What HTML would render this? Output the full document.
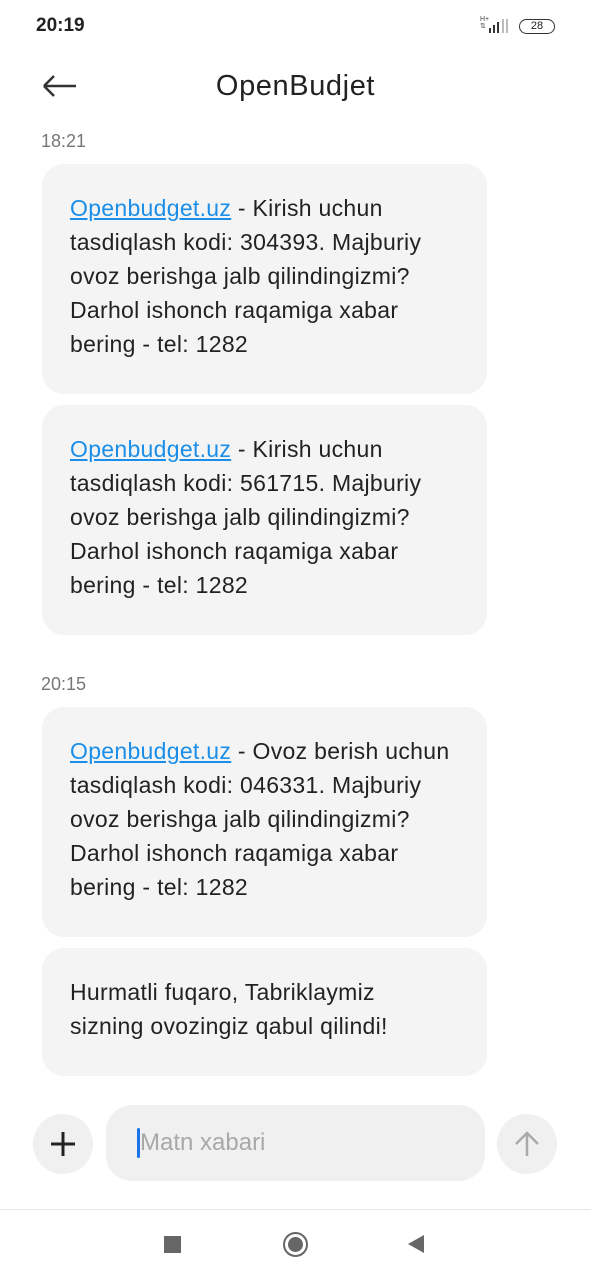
<!DOCTYPE html>
<html><head><meta charset="utf-8"><style>
*{margin:0;padding:0;box-sizing:border-box}
body{width:591px;height:1280px;background:#fff;font-family:"Liberation Sans",sans-serif;position:relative;overflow:hidden;color:#222}
.a{position:absolute}
.b{position:absolute;left:42px;width:445px;background:#f4f4f4;border-radius:22px;padding:27px 0 0 28px;font-size:23px;letter-spacing:0.3px;line-height:34px;color:#222;white-space:nowrap}
.b a{color:#1a8ee8;text-decoration:underline}
.t{position:absolute;left:41px;font-size:18px;color:#777}
</style></head><body>
<div class="a" style="left:36px;top:15px;font-size:19px;font-weight:bold;color:#222">20:19</div>
<div class="a" style="left:480px;top:16px;font-size:7px;color:#444;line-height:7px">H+<br>⇅</div>
<svg class="a" style="left:488px;top:18px" width="24" height="16"><rect x="1" y="10" width="2" height="5" fill="#333"/><rect x="5" y="7" width="2" height="8" fill="#333"/><rect x="9" y="4" width="2" height="11" fill="#333"/><rect x="14" y="1" width="2" height="14" fill="#bbb"/><rect x="18" y="1" width="2" height="14" fill="#bbb"/></svg>
<div class="a" style="left:519px;top:19px;width:36px;height:15px;border:1.5px solid #333;border-radius:8px;font-size:11px;text-align:center;line-height:12px;color:#222">28</div>
<svg class="a" style="left:40px;top:72px" width="40" height="28"><path d="M4 14H36M4 14L14 4M4 14L14 24" stroke="#333" stroke-width="2.5" fill="none"/></svg>
<div class="a" style="left:0;width:591px;top:70px;text-align:center;font-size:29px;letter-spacing:0.6px;color:#222">OpenBudjet</div>
<div class="t" style="top:131px">18:21</div>
<div class="b" style="top:164px;height:230px"><a>Openbudget.uz</a> - Kirish uchun<br>tasdiqlash kodi: 304393. Majburiy<br>ovoz berishga jalb qilindingizmi?<br>Darhol ishonch raqamiga xabar<br>bering - tel: 1282</div>
<div class="b" style="top:405px;height:230px"><a>Openbudget.uz</a> - Kirish uchun<br>tasdiqlash kodi: 561715. Majburiy<br>ovoz berishga jalb qilindingizmi?<br>Darhol ishonch raqamiga xabar<br>bering - tel: 1282</div>
<div class="t" style="top:674px">20:15</div>
<div class="b" style="top:707px;height:230px"><a>Openbudget.uz</a> - Ovoz berish uchun<br>tasdiqlash kodi: 046331. Majburiy<br>ovoz berishga jalb qilindingizmi?<br>Darhol ishonch raqamiga xabar<br>bering - tel: 1282</div>
<div class="b" style="top:948px;height:128px">Hurmatli fuqaro, Tabriklaymiz<br>sizning ovozingiz qabul qilindi!</div>
<div class="a" style="left:33px;top:1114px;width:60px;height:60px;border-radius:50%;background:#f0f0f0"></div>
<svg class="a" style="left:49px;top:1130px" width="28" height="28"><path d="M14 2V26M2 14H26" stroke="#222" stroke-width="3"/></svg>
<div class="a" style="left:106px;top:1105px;width:379px;height:76px;border-radius:26px;background:#f0f0f0"></div>
<div class="a" style="left:137px;top:1128px;width:3px;height:30px;background:#1a73e8;border-radius:2px"></div>
<div class="a" style="left:140px;top:1129px;font-size:24px;color:#a8a8a8">Matn xabari</div>
<div class="a" style="left:497px;top:1114px;width:60px;height:60px;border-radius:50%;background:#f0f0f0"></div>
<svg class="a" style="left:513px;top:1130px" width="28" height="28"><path d="M14 26V3M3 14L14 3L25 14" stroke="#aaa" stroke-width="2.5" fill="none"/></svg>
<div class="a" style="left:0;top:1209px;width:591px;height:1px;background:#e6e6e6"></div>
<div class="a" style="left:164px;top:1236px;width:17px;height:17px;background:#666"></div>
<div class="a" style="left:283px;top:1232px;width:25px;height:25px;border:2px solid #666;border-radius:50%"></div>
<div class="a" style="left:288px;top:1237px;width:15px;height:15px;background:#666;border-radius:50%"></div>
<svg class="a" style="left:406px;top:1234px" width="20" height="20"><path d="M18 1V19L2 10Z" fill="#666"/></svg>
</body></html>
